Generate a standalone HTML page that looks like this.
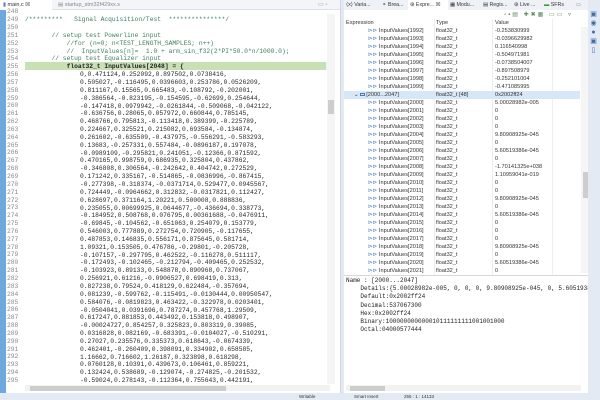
<!DOCTYPE html>
<html><head><meta charset="utf-8"><style>
*{margin:0;padding:0;box-sizing:border-box}
body{width:600px;height:400px;overflow:hidden;background:#e3eaf4;font-family:"Liberation Sans",sans-serif;position:relative}
.abs{position:absolute}
#ed{left:0;top:0;width:341px;height:393px;background:#fff;border-right:1px solid #cfd6e0;overflow:hidden}
#edtabs{left:0;top:0;width:341px;height:10px;background:#f3f5f8;border-bottom:1px solid #dde3ea}
.code{font-family:"Liberation Mono",monospace;font-size:6.3px;line-height:7.85px;white-space:pre;color:#2a2a2a}
.ln{left:7px;width:14px;color:#8a8a8a;text-align:left}
.cm{color:#3f7f5f}
#rp{left:344px;top:0;width:244px;height:393px;background:#fff;overflow:hidden}
.row{position:absolute;left:0;width:236px;height:8px;font-size:5.6px;line-height:8px;color:#333}
.row span{position:absolute}
.ic{display:inline-block;width:5px;height:3px;border:1px solid #4a7ab0;margin-right:1px;vertical-align:middle}
.dt{font-family:"Liberation Mono",monospace;font-size:6px;line-height:8.2px;color:#222;white-space:pre}
.tb span{position:absolute;top:0;white-space:nowrap}
</style></head><body>
<div id="ed" class="abs">
 <div id="edtabs" class="abs">
  <div class="abs" style="left:0;top:0;width:52px;height:10px;background:#fff;font-size:5.5px;line-height:10px;padding-left:3px;color:#333"><span style="color:#5a7fb0">▮</span> main.c ☒</div>
  <div class="abs" style="left:58px;top:0;font-size:5.5px;line-height:10px;color:#888">▤ startup_stm32f429xx.s</div>
  <div class="abs" style="left:318px;top:0;font-size:6px;line-height:10px;color:#999">▭ ▫</div>
 </div>
 <div class="abs" style="left:0;top:10px;width:6px;height:383px;background:#6ea8dc"></div>
 <div class="abs" style="left:25px;top:62px;width:301px;height:8px;background:#c7e0b4"></div>
 <div class="abs" style="left:326px;top:62px;width:3px;height:8px;background:#e8f2fb"></div>
 <div class="abs" style="left:327px;top:14px;width:8px;height:370px;background:#f5f5f5"></div>
 <div class="abs" style="left:328px;top:100px;width:6px;height:14px;background:#cdcdcd"></div>
 <div class="abs" style="left:25px;top:385px;width:305px;height:6px;background:#f2f2f2"></div>
 <div class="abs" style="left:30px;top:386px;width:196px;height:5px;background:#cdcdcd"></div>
 <div class="abs code ln" style="top:8.3px">248
249
250
251
252
253
254
255
256
257
258
259
260
261
262
263
264
265
266
267
268
269
270
271
272
273
274
275
276
277
278
279
280
281
282
283
284
285
286
287
288
289
290
291
292
293
294
295</div>
 <div class="abs code cm" style="left:25px;top:8.3px">
/*********   Signal Acquisition/Test  ***************/

       // setup test Powerline input
           //for (n=0; n&lt;TEST_LENGTH_SAMPLES; n++)
           //  InputValues[n]=  1.0 + arm_sin_f32(2*PI*50.0*n/1000.0);
       // setup test Equalizer input
           <b style="color:#222">float32_t InputValues[2048] = {</b></div>
 <div class="abs code" style="left:80px;top:71.2px">0,0.471124,0.252092,0.897502,0.0738416,
0.505027,-0.116495,0.0396603,0.253786,0.0526209,
0.811167,0.15565,0.665483,-0.108792,-0.202001,
-0.386564,-0.823195,-0.154595,-0.62699,0.254644,
-0.147418,0.0979942,-0.0261844,-0.509068,-0.042122,
-0.636756,0.28065,0.057972,0.660844,0.785145,
0.468766,0.795813,-0.113418,0.389399,-0.225789,
0.224667,0.325521,0.215082,0.693584,-0.134874,
0.261602,-0.635509,-0.437975,-0.556291,-0.583293,
0.13683,-0.257331,0.557484,-0.0896187,0.197078,
-0.0989109,-0.295821,0.241051,-0.12366,0.871592,
0.470165,0.998759,0.686935,0.325804,0.437862,
-0.346808,0.306564,-0.242642,0.404742,0.272529,
0.171242,0.335167,-0.514865,-0.0836996,-0.867415,
-0.277398,-0.318374,-0.0371714,0.529477,0.0945567,
0.724449,-0.0964662,0.312832,-0.0317821,0.112427,
0.628697,0.371164,1.20221,0.500008,0.888836,
0.235055,0.00699925,0.0644677,-0.436694,0.338773,
-0.184952,0.508768,0.076795,0.00361688,-0.0476911,
-0.69845,-0.104562,-0.651063,0.254079,0.153779,
0.546003,0.777889,0.272754,0.720905,-0.117655,
0.487853,0.146835,0.556171,0.875645,0.581714,
1.09321,0.153505,0.476786,-0.29801,-0.205728,
-0.107157,-0.297795,0.462522,-0.116278,0.511117,
-0.172493,-0.102465,-0.212794,-0.409465,0.252532,
-0.103923,0.89133,0.548878,0.890968,0.737067,
0.256921,0.61216,-0.0906527,0.698419,0.313,
0.827238,0.79524,0.418129,0.622484,-0.357694,
0.081239,-0.599762,-0.115491,-0.0130444,0.00950547,
0.584076,-0.0819823,0.463422,-0.322978,0.0203401,
-0.0504041,0.0391696,0.787274,0.457768,1.29509,
0.617247,0.881853,0.443492,0.153818,0.498907,
-0.00024727,0.854257,0.325823,0.803319,0.39085,
0.0316828,0.082169,-0.683391,-0.0104027,-0.510291,
0.27027,0.235576,0.335373,0.618643,-0.0674339,
0.462401,-0.260409,0.398091,0.334902,0.658585,
1.16662,0.716602,1.26187,0.323898,0.618298,
0.0760128,0.10391,0.439673,0.106461,0.859221,
0.132424,0.538689,-0.129074,-0.274825,-0.201532,
-0.59024,0.278143,-0.112364,0.755643,0.442191,</div>
</div>

<div id="rp" class="abs">
 <div class="abs tb" style="left:0;top:0;width:244px;height:10px;background:#eef2f7;font-size:5.3px;line-height:10px;color:#333"><span style="left:2px">⟨x⟩ Varia...</span><span style="left:38px">⚬ Brea...</span><span style="left:64px;width:40px;height:10px;background:#fff;padding-left:2px">⊛ Expre... ☒</span><span style="left:106px">▦ Modu...</span><span style="left:139px">▤ Regis...</span><span style="left:170px">⊛ Live ...</span><span style="left:200px"><span style="position:static;color:#3a9a3a">▬</span> SFRs</span><span style="left:232px;color:#999">▭</span></div>
 <div class="abs" style="left:160px;top:11px;font-size:6px;color:#5a8a5a;letter-spacing:2px;white-space:nowrap">▫▪▤ ✚✖▦ ▭▭ ▿</div>
 <div class="row" style="top:19px;color:#333"><span style="left:2px">Expression</span><span style="left:92px">Type</span><span style="left:151px">Value</span></div>
 <div class="abs" style="left:90px;top:19px;width:1px;height:256px;background:#eee"></div>
 <div class="abs" style="left:148px;top:19px;width:1px;height:256px;background:#eee"></div>
 <div class="abs" style="left:208px;top:19px;width:1px;height:256px;background:#eee"></div>
 <div class="abs" style="left:237px;top:27px;width:7px;height:246px;background:#f5f5f5"></div>
 <div class="abs" style="left:239px;top:172px;width:6px;height:26px;background:#cdcdcd"></div>
 <div id="rows"></div>
 <div class="abs" style="left:0;top:275px;width:244px;height:1px;background:#d8d8d8"></div>
 <div class="abs dt" style="left:2px;top:277px">Name : [2000...2047]
    Details:{5.00028982e-005, 0, 0, 0, 9.80908925e-045, 0, 5.6051938
    Default:0x2002ff24
    Decimal:537067300
    Hex:0x2002ff24
    Binary:100000000000010111111111001001000
    Octal:04000577444</div>
 <div class="abs" style="left:2px;top:385px;width:235px;height:6px;background:#f2f2f2"></div>
 <div class="abs" style="left:6px;top:386px;width:35px;height:5px;background:#cdcdcd"></div>
</div>
<div class="abs" style="left:589px;top:10px;width:9px;font-size:7px;line-height:9px;color:#3a6ea8;text-align:center">▣<br>◉<br>●<br>▣<br>▯</div>
<div class="abs" style="left:0;top:393px;width:600px;height:7px;font-size:4.5px;line-height:7px;color:#333">
 <span class="abs" style="left:299px">Writable</span>
 <span class="abs" style="left:354px">Smart Insert</span>
 <span class="abs" style="left:404px">255 : 1 : 14133</span>
</div>
<script>
var v={1992:"-0.253830999",1993:"-0.0396629982",1994:"0.116540998",1995:"-0.504971981",1996:"-0.0738504007",1997:"-0.897508979",1998:"-0.252101004",1999:"-0.471085995",2000:"5.00028982e-005",2004:"9.80908925e-045",2006:"5.60519386e-045",2008:"-1.70141325e+038",2009:"1.10959041e-019",2012:"9.80908925e-045",2014:"5.60519386e-045",2018:"9.80908925e-045",2020:"5.60519386e-045"};
var h="",y=27;
function row(n){h+='<div class="row" style="top:'+y+'px"><span style="left:24px"><span style="position:static;color:#4a7ab0">⊳⊳</span> InputValues['+n+']</span><span style="left:92px">float32_t</span><span style="left:151px">'+(v[n]||"0")+'</span></div>';y+=8;}
for(var i=1992;i<2000;i++)row(i);
h+='<div class="row" style="top:'+y+'px;background:#d6e7f8"><span style="left:10px">⌄ <span class="ic" style="position:static"></span>[2000...2047]</span><span style="left:92px">float32_t [48]</span><span style="left:151px">0x2002ff24</span></div>';y+=8;
for(var i=2000;i<2022;i++)row(i);
document.getElementById("rows").innerHTML=h;
</script>
</body></html>
